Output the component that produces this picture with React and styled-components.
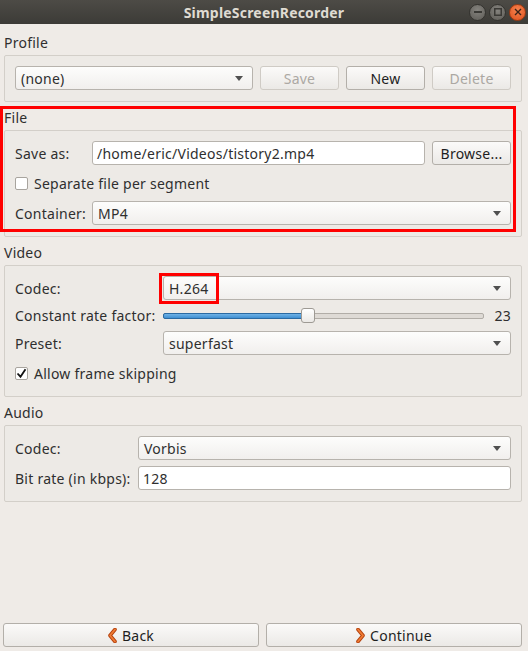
import React from "react"
import styled, { createGlobalStyle } from "styled-components"

const GlobalStyle = createGlobalStyle`
  html, body {
    margin: 0;
    padding: 0;
  }
  body {
    background: #efebe7;
    font-family: "Noto Sans", "DejaVu Sans", sans-serif;
    font-size: 14px;
    letter-spacing: 0.25px;
    color: #2f2f2f;
  }
`

const Window = styled.div`
  display: flex;
  flex-direction: column;
  width: 528px;
  height: 651px;
`

const TitleBar = styled.div`
  flex: none;
  height: 24px;
  display: grid;
  grid-template-columns: 1fr auto 1fr;
  align-items: center;
  background: linear-gradient(#4d4b46, #3c3b37);
  color: #dfdbd2;
  font-weight: bold;
  font-size: 14px;
  letter-spacing: 0.2px;

  .title {
    grid-column: 2;
  }
`

const WinControls = styled.div`
  justify-self: end;
  display: flex;
  gap: 3px;
  padding-right: 2px;
`

const WinButton = styled.div`
  width: 17px;
  height: 17px;
  box-sizing: border-box;
  border-radius: 50%;
  display: grid;
  place-content: center;
  border: 1px solid ${p => (p.$close ? "#9c3a12" : "#34332f")};
  background: ${p =>
    p.$close
      ? "radial-gradient(circle at 50% 35%, #f5834f, #e0501c)"
      : "radial-gradient(circle at 50% 35%, #85837e, #5d5b56)"};
`

const Content = styled.div`
  padding: 0 6px 0 4px;
`

const Section = styled.section`
  position: relative;
  margin-top: ${p => p.$top}px;
`

const SectionLabel = styled.div`
  line-height: 18px;
  height: 18px;
`

const GroupBox = styled.div`
  margin-top: 3px;
  border: 1px solid #d3cfc9;
  border-radius: 2px;
  background: #edeae6;
  padding: 10px 10px 11px;
`

const Row = styled.div`
  display: flex;
  align-items: center;
  gap: 7px;
  height: 24px;
`

const FormGrid = styled.div`
  display: grid;
  grid-template-columns: ${p => p.$label}px 1fr;
  row-gap: 6px;
  align-items: center;
`

const FieldLabel = styled.div`
  white-space: nowrap;
`

const FullRow = styled.div`
  grid-column: 1 / -1;
  display: flex;
  align-items: center;
  height: ${p => p.$h || 24}px;
`

const Combo = styled.div`
  position: relative;
  flex: 1;
  height: 24px;
  box-sizing: border-box;
  display: flex;
  align-items: center;
  justify-content: space-between;
  padding: 0 9px 0 5px;
  border: 1px solid #b7b3ad;
  border-radius: 3px;
  background: linear-gradient(#fdfdfc, #f1efed);
`

const LineEdit = styled.div`
  flex: 1;
  height: 24px;
  box-sizing: border-box;
  display: flex;
  align-items: center;
  padding: 0 4px;
  border: 1px solid #b7b3ad;
  border-radius: 3px;
  background: #fff;
`

const Button = styled.div`
  flex: none;
  width: ${p => (p.$wide ? "auto" : "79px")};
  height: 24px;
  box-sizing: border-box;
  display: flex;
  align-items: center;
  justify-content: center;
  gap: 5px;
  border: 1px solid ${p => (p.$disabled ? "#cfcbc5" : "#b3afa9")};
  border-radius: 3px;
  background: linear-gradient(#fbfaf9, #ebe9e6);
  color: ${p => (p.$disabled ? "#aca8a3" : "#1e1e1e")};
`

const CheckBox = styled.span`
  width: 13px;
  height: 13px;
  box-sizing: border-box;
  margin-right: 6px;
  border: 1px solid #a8a49e;
  border-radius: 2px;
  background: #fff;
  display: grid;
  place-content: center;
`

const Highlight = styled.div`
  position: absolute;
  border: 3px solid #ff0000;
  pointer-events: none;
`

const SliderRow = styled.div`
  display: flex;
  align-items: center;
  height: 18px;
  gap: 10px;
`

const Track = styled.div`
  position: relative;
  flex: 1;
  height: 4px;
  border: 1px solid #b1ada7;
  border-radius: 2px;
  background: #dedad5;
`

const TrackFill = styled.div`
  position: absolute;
  left: -1px;
  top: -1px;
  height: 6px;
  box-sizing: border-box;
  border: 1px solid #2b6aa2;
  border-radius: 2px;
  background: linear-gradient(#6fb2e6, #3f8fd2);
`

const Handle = styled.div`
  position: absolute;
  top: -6px;
  width: 14px;
  height: 15px;
  box-sizing: border-box;
  margin-left: -7px;
  border: 1px solid #9e9a94;
  border-radius: 3px;
  background: linear-gradient(#ffffff, #ebe9e6);
`

const SliderValue = styled.div`
  width: 17px;
  text-align: right;
`

const BottomBar = styled.div`
  margin-top: auto;
  display: grid;
  grid-template-columns: 1fr 1fr;
  gap: 7px;
  padding: 0 6px 4px 3px;
`

const Arrow = () => (
  <svg width="8" height="5" viewBox="0 0 8 5">
    <path d="M0 0h8L4 5z" fill="#505050" />
  </svg>
)

const Check = () => (
  <svg width="11" height="11" viewBox="0 0 11 11">
    <path d="M1.5 5.5l3 3.2 5-7.5" fill="none" stroke="#111" strokeWidth="1.8" />
  </svg>
)

const Chevron = ({ dir }) => (
  <svg width="9" height="15" viewBox="0 0 9 15">
    <g transform={dir === "left" ? "" : "translate(9 0) scale(-1 1)"}>
      <path d="M7 1.5L2 7.5l5 6" fill="none" stroke="#b4420f" strokeWidth="3.6" strokeLinecap="round" strokeLinejoin="round" />
      <path d="M7 1.5L2 7.5l5 6" fill="none" stroke="#f07c34" strokeWidth="1.8" strokeLinecap="round" strokeLinejoin="round" />
    </g>
  </svg>
)

function Select({ value, children }) {
  return (
    <Combo>
      <span>{value}</span>
      <Arrow />
      {children}
    </Combo>
  )
}

export default function App() {
  const crf = 23
  const crfPos = (crf / 51) * 100

  return (
    <Window>
      <GlobalStyle />
      <TitleBar>
        <span className="title">SimpleScreenRecorder</span>
        <WinControls>
          <WinButton>
            <svg width="8" height="8" viewBox="0 0 8 8">
              <rect x="0" y="3" width="8" height="2" fill="#3a3935" />
            </svg>
          </WinButton>
          <WinButton>
            <svg width="8" height="8" viewBox="0 0 8 8">
              <rect x="0.75" y="0.75" width="6.5" height="6.5" fill="none" stroke="#3a3935" strokeWidth="1.5" />
            </svg>
          </WinButton>
          <WinButton $close>
            <svg width="8" height="8" viewBox="0 0 8 8">
              <path d="M1 1l6 6M7 1L1 7" stroke="#3b2218" strokeWidth="1.4" />
            </svg>
          </WinButton>
        </WinControls>
      </TitleBar>

      <Content>
        <Section $top={10}>
          <SectionLabel>Profile</SectionLabel>
          <GroupBox>
            <Row>
              <Select value="(none)" />
              <Button $disabled>Save</Button>
              <Button>New</Button>
              <Button $disabled>Delete</Button>
            </Row>
          </GroupBox>
        </Section>

        <Section $top={7}>
          <SectionLabel>File</SectionLabel>
          <GroupBox>
            <FormGrid $label={77}>
              <FieldLabel>Save as:</FieldLabel>
              <Row>
                <LineEdit>/home/eric/Videos/tistory2.mp4</LineEdit>
                <Button>Browse...</Button>
              </Row>
              <FullRow>
                <CheckBox />
                Separate file per segment
              </FullRow>
              <FieldLabel>Container:</FieldLabel>
              <Select value="MP4" />
            </FormGrid>
          </GroupBox>
          <Highlight style={{ top: -3, left: -4, right: 6, bottom: 5 }} />
        </Section>

        <Section $top={7}>
          <SectionLabel>Video</SectionLabel>
          <GroupBox>
            <FormGrid $label={148}>
              <FieldLabel>Codec:</FieldLabel>
              <Select value="H.264">
                <Highlight style={{ left: -5, top: -4, width: 60, height: 31, boxSizing: "border-box" }} />
              </Select>
              <FieldLabel>Constant rate factor:</FieldLabel>
              <SliderRow>
                <Track>
                  <TrackFill style={{ width: `calc(${crfPos}% + 2px)` }} />
                  <Handle style={{ left: `${crfPos}%` }} />
                </Track>
                <SliderValue>{crf}</SliderValue>
              </SliderRow>
              <FieldLabel>Preset:</FieldLabel>
              <Select value="superfast" />
              <FullRow>
                <CheckBox>
                  <Check />
                </CheckBox>
                Allow frame skipping
              </FullRow>
            </FormGrid>
          </GroupBox>
        </Section>

        <Section $top={7}>
          <SectionLabel>Audio</SectionLabel>
          <GroupBox>
            <FormGrid $label={123}>
              <FieldLabel>Codec:</FieldLabel>
              <Select value="Vorbis" />
              <FieldLabel>Bit rate (in kbps):</FieldLabel>
              <LineEdit>128</LineEdit>
            </FormGrid>
          </GroupBox>
        </Section>
      </Content>

      <BottomBar>
        <Button $wide>
          <Chevron dir="left" />
          Back
        </Button>
        <Button $wide>
          <Chevron dir="right" />
          Continue
        </Button>
      </BottomBar>
    </Window>
  )
}
